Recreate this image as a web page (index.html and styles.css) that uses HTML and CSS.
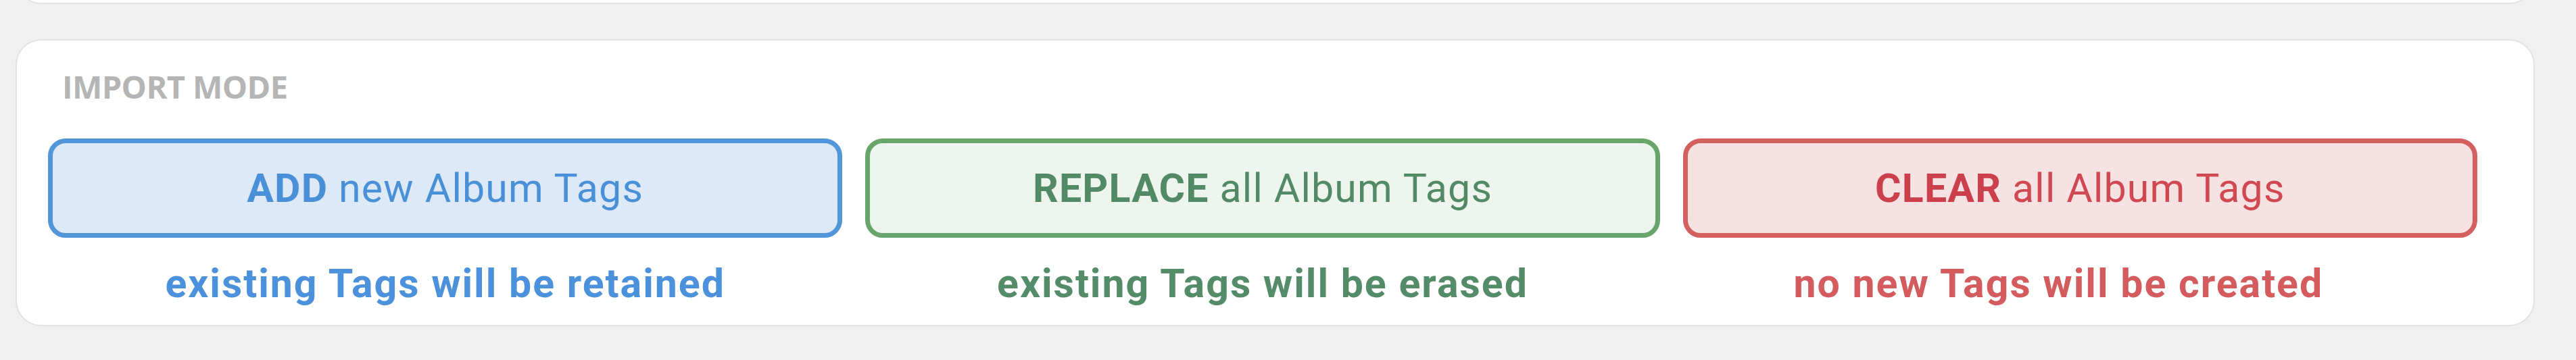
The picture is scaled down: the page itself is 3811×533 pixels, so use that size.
FILE: index.html
```html
<!DOCTYPE html>
<html lang="en">
<head>
<meta charset="utf-8">
<title>Import Mode</title>
<link rel="stylesheet" href="styles.css">
</head>
<body>
<div class="page">
  <div class="prev-card"></div>
  <section class="card">
    <div class="label">IMPORT MODE</div>
    <div class="modes">
      <div class="mode mode-add">
        <button class="mode-btn"><b>ADD</b> new Album Tags</button>
        <div class="mode-desc">existing Tags will be retained</div>
      </div>
      <div class="mode mode-replace">
        <button class="mode-btn"><b>REPLACE</b> all Album Tags</button>
        <div class="mode-desc">existing Tags will be erased</div>
      </div>
      <div class="mode mode-clear">
        <button class="mode-btn"><b>CLEAR</b> all Album Tags</button>
        <div class="mode-desc">no new Tags will be created</div>
      </div>
    </div>
  </section>
</div>
</body>
</html>
```
FILE: styles.css
```css
html, body {
  margin: 0;
  padding: 0;
  background: #f0f0f0;
  overflow: hidden;
}

.page {
  padding: 0 61px 0 23px;
  display: flex;
  flex-direction: column;
}

.prev-card {
  height: 98px;
  margin-top: -96px;
  background: #ffffff;
  border: 2px solid #e3e3e3;
  border-radius: 38px;
}

.card {
  margin-top: 52px;
  background: #ffffff;
  border: 2px solid #e3e3e3;
  border-radius: 38px;
  padding: 45px 83px 27px 46px;
}

.label {
  font-family: "Open Sans", sans-serif;
  font-weight: 700;
  font-size: 47px;
  line-height: 47px;
  color: #b5b5b5;
  margin-left: 21px;
  letter-spacing: -0.6px;
}

.modes {
  margin-top: 53px;
  display: grid;
  grid-template-columns: repeat(3, 1fr);
  column-gap: 34px;
}

.mode {
  display: flex;
  flex-direction: column;
  align-items: stretch;
}

.mode-btn {
  box-sizing: border-box;
  height: 147px;
  border: 7px solid;
  border-radius: 26px;
  display: flex;
  align-items: center;
  justify-content: center;
  font-family: Roboto, sans-serif;
  font-size: 59px;
  font-weight: 400;
  padding: 0;
  margin: 0;
  white-space: pre;
  letter-spacing: 1.2px;
}

.mode-btn b {
  font-weight: 700;
}

.mode-desc {
  margin-top: 33px;
  text-align: center;
  font-family: Roboto, sans-serif;
  font-size: 59px;
  font-weight: 700;
  letter-spacing: 2px;
}

.mode-add .mode-btn {
  border-color: #5296d9;
  background: #dde9f6;
  color: #4a90d9;
}
.mode-add .mode-desc { color: #4b91db; }

.mode-replace .mode-btn {
  border-color: #68a56b;
  background: #eef5ee;
  color: #528a66;
}
.mode-replace .mode-desc { color: #548b68; }

.mode-clear .mode-btn {
  border-color: #d45f5f;
  background: #f6e2e2;
  color: #d04852;
}
.mode-clear .mode-btn b { color: #cc404c; }
.mode-clear .mode-desc {
  color: #d45b5e;
  padding-right: 64px;
}
```
